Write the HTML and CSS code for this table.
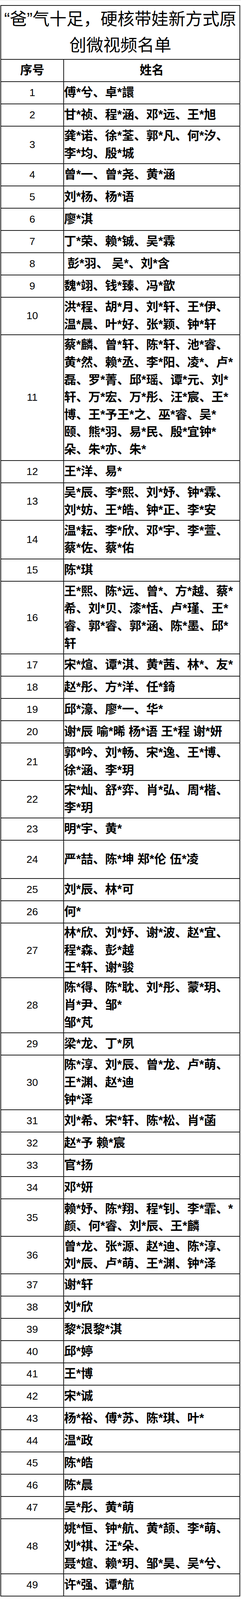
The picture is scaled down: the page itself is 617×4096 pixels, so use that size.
FILE: index.html
```html
<!DOCTYPE html>
<html lang="zh-CN">
<head>
<meta charset="utf-8">
<title>“爸”气十足，硬核带娃新方式原创微视频名单</title>
<link rel="stylesheet" href="styles.css">
</head>
<body>
<div class="topline"></div>
<div class="sheet">
<table class="roster">
<colgroup><col class="c-no"><col class="c-name"></colgroup>
<tr class="t-row"><th colspan="2" class="title">“爸”气十足，硬核带娃新方式原<br>创微视频名单</th></tr>
<tr class="h1"><th class="head">序号</th><th class="head">姓名</th></tr>
<tr class="h1"><td class="no">1</td><td class="names">傅*兮、卓*譞</td></tr>
<tr class="h1"><td class="no">2</td><td class="names">甘*祯、程*涵、邓*远、王*旭</td></tr>
<tr class="h2"><td class="no">3</td><td class="names">龚*诺、徐*荃、郭*凡、何*汐、<br>李*均、殷*城</td></tr>
<tr class="h1"><td class="no">4</td><td class="names">曾*一、曾*尧、黄*涵</td></tr>
<tr class="h1"><td class="no">5</td><td class="names">刘*杨、杨*语</td></tr>
<tr class="h1"><td class="no">6</td><td class="names">廖*淇</td></tr>
<tr class="h1"><td class="no">7</td><td class="names">丁*荣、赖*铖、吴*霖</td></tr>
<tr class="h1"><td class="no">8</td><td class="names">&nbsp;彭*羽、 吴*、刘*含</td></tr>
<tr class="h1"><td class="no">9</td><td class="names">魏*翊、钱*臻、冯*歆</td></tr>
<tr class="h2"><td class="no">10</td><td class="names">洪*程、胡*月、刘*轩、王*伊、<br>温*晨、叶*好、张*颖、钟*轩</td></tr>
<tr class="h7"><td class="no">11</td><td class="names">蔡*麟、曾*轩、陈*轩、池*睿、<br>黄*然、赖*丞、李*阳、凌*、卢*<br>磊、罗*菁、邱*瑶、谭*元、刘*<br>轩、万*宏、万*彤、汪*宸、王*<br>博、王*予王*之、巫*睿、吴*<br>颐、熊*羽、易*民、殷*宜钟*<br>朵、朱*亦、朱*</td></tr>
<tr class="h1"><td class="no">12</td><td class="names">王*洋、易*</td></tr>
<tr class="h2"><td class="no">13</td><td class="names">吴*辰、李*熙、刘*妤、钟*霖、<br>刘*妨、王*皓、钟*正、李*安</td></tr>
<tr class="h2b"><td class="no">14</td><td class="names">温*耘、李*欣、邓*宇、李*萱、<br>蔡*佐、蔡*佑</td></tr>
<tr class="h1"><td class="no">15</td><td class="names">陈*琪</td></tr>
<tr class="h4"><td class="no">16</td><td class="names">王*熙、陈*远、曾*、方*越、蔡*<br>希、刘*贝、漆*恬、卢*瑾、王*<br>睿、郭*睿、郭*涵、陈*墨、邱*<br>轩</td></tr>
<tr class="h1"><td class="no">17</td><td class="names">宋*煊、谭*淇、黄*茜、林*、友*</td></tr>
<tr class="h1"><td class="no">18</td><td class="names">赵*彤、方*洋、任*錡</td></tr>
<tr class="h1"><td class="no">19</td><td class="names">邱*濠、廖*一、华*</td></tr>
<tr class="h1"><td class="no">20</td><td class="names">谢*辰 喻*晞 杨*语 王*程 谢*妍</td></tr>
<tr class="h2"><td class="no">21</td><td class="names">郭*吟、刘*畅、宋*逸、王*博、<br>徐*涵、李*玥</td></tr>
<tr class="h2"><td class="no">22</td><td class="names">宋*灿、舒*弈、肖*弘、周*楷、<br>李*玥</td></tr>
<tr class="h1"><td class="no">23</td><td class="names">明*宇、黄*</td></tr>
<tr class="h2c"><td class="no">24</td><td class="names">严*喆、陈*坤 郑*伦 伍*凌</td></tr>
<tr class="h1"><td class="no">25</td><td class="names">刘*辰、林*可</td></tr>
<tr class="h1"><td class="no">26</td><td class="names">何*</td></tr>
<tr class="h3"><td class="no">27</td><td class="names">林*欣、刘*妤、谢*波、赵*宜、<br>程*森、彭*越<br>王*轩、谢*骏</td></tr>
<tr class="h3"><td class="no">28</td><td class="names">陈*得、陈*耽、刘*彤、蒙*玥、<br>肖*尹、邹*<br>邹*芃</td></tr>
<tr class="h1"><td class="no">29</td><td class="names">梁*龙、丁*夙</td></tr>
<tr class="h3"><td class="no">30</td><td class="names">陈*淳、刘*辰、曾*龙、卢*萌、<br>王*渊、赵*迪<br>钟*泽</td></tr>
<tr class="h1"><td class="no">31</td><td class="names">刘*希、宋*轩、陈*松、肖*菡</td></tr>
<tr class="h1"><td class="no">32</td><td class="names">赵*予 赖*宸</td></tr>
<tr class="h1"><td class="no">33</td><td class="names">官*扬</td></tr>
<tr class="h1"><td class="no">34</td><td class="names">邓*妍</td></tr>
<tr class="h2"><td class="no">35</td><td class="names">赖*妤、陈*翔、程*钊、李*霏、*<br>颜、何*睿、刘*辰、王*麟</td></tr>
<tr class="h2"><td class="no">36</td><td class="names">曾*龙、张*源、赵*迪、陈*淳、<br>刘*辰、卢*萌、王*渊、钟*泽</td></tr>
<tr class="h1"><td class="no">37</td><td class="names">谢*轩</td></tr>
<tr class="h1"><td class="no">38</td><td class="names">刘*欣</td></tr>
<tr class="h1"><td class="no">39</td><td class="names">黎*泿黎*淇</td></tr>
<tr class="h1"><td class="no">40</td><td class="names">邱*婷</td></tr>
<tr class="h1"><td class="no">41</td><td class="names">王*博</td></tr>
<tr class="h1"><td class="no">42</td><td class="names">宋*诚</td></tr>
<tr class="h1"><td class="no">43</td><td class="names">杨*裕、傅*苏、陈*琪、叶*</td></tr>
<tr class="h1"><td class="no">44</td><td class="names">温*政</td></tr>
<tr class="h1"><td class="no">45</td><td class="names">陈*皓</td></tr>
<tr class="h1"><td class="no">46</td><td class="names">陈*晨</td></tr>
<tr class="h1"><td class="no">47</td><td class="names">吴*彤、黄*萌</td></tr>
<tr class="h3"><td class="no">48</td><td class="names">姚*恒、钟*航、黄*颉、李*萌、<br>刘*祺、汪*朵、<br>聂*媗、赖*玥、邹*昊、吴*兮、</td></tr>
<tr class="h1"><td class="no">49</td><td class="names">许*强、谭*航</td></tr>
</table>
</div>
</body>
</html>
```

FILE: styles.css
```css
html, body {
  margin: 0;
  padding: 0;
  background: #ffffff;
}

body {
  font-family: "Liberation Sans", "Noto Sans CJK SC", sans-serif;
  color: #000000;
}

.topline {
  height: 1px;
  background: #e4e4e4;
}

.sheet {
  padding-top: 12px;
  padding-left: 1px;
}

.roster {
  border-collapse: collapse;
  table-layout: fixed;
  width: 614px;
}

.roster th,
.roster td {
  border: 2px solid #1c1c1c;
  padding: 0;
  vertical-align: middle;
}

.c-no {
  width: 161px;
}

.t-row {
  height: 137.5px;
}

.title {
  font-size: 43.5px;
  font-weight: 400;
  line-height: 66.4px;
  text-align: center;
  padding-top: 2px;
}

.head {
  font-size: 31px;
  font-weight: 700;
  text-align: center;
  line-height: 44.6px;
}

.no {
  font-size: 26.5px;
  font-weight: 400;
  text-align: center;
  line-height: 44.6px;
}

.names {
  font-size: 31px;
  font-weight: 700;
  text-align: left;
  line-height: 44.6px;
  padding-left: 2px;
}

.h1 { height: 57px; }
.h2 { height: 96px; }
.h2b { height: 99.5px; }
.h2c { height: 97.6px; }
.h3 { height: 140.5px; }
.h4 { height: 186px; }
.h7 { height: 322px; }
```
